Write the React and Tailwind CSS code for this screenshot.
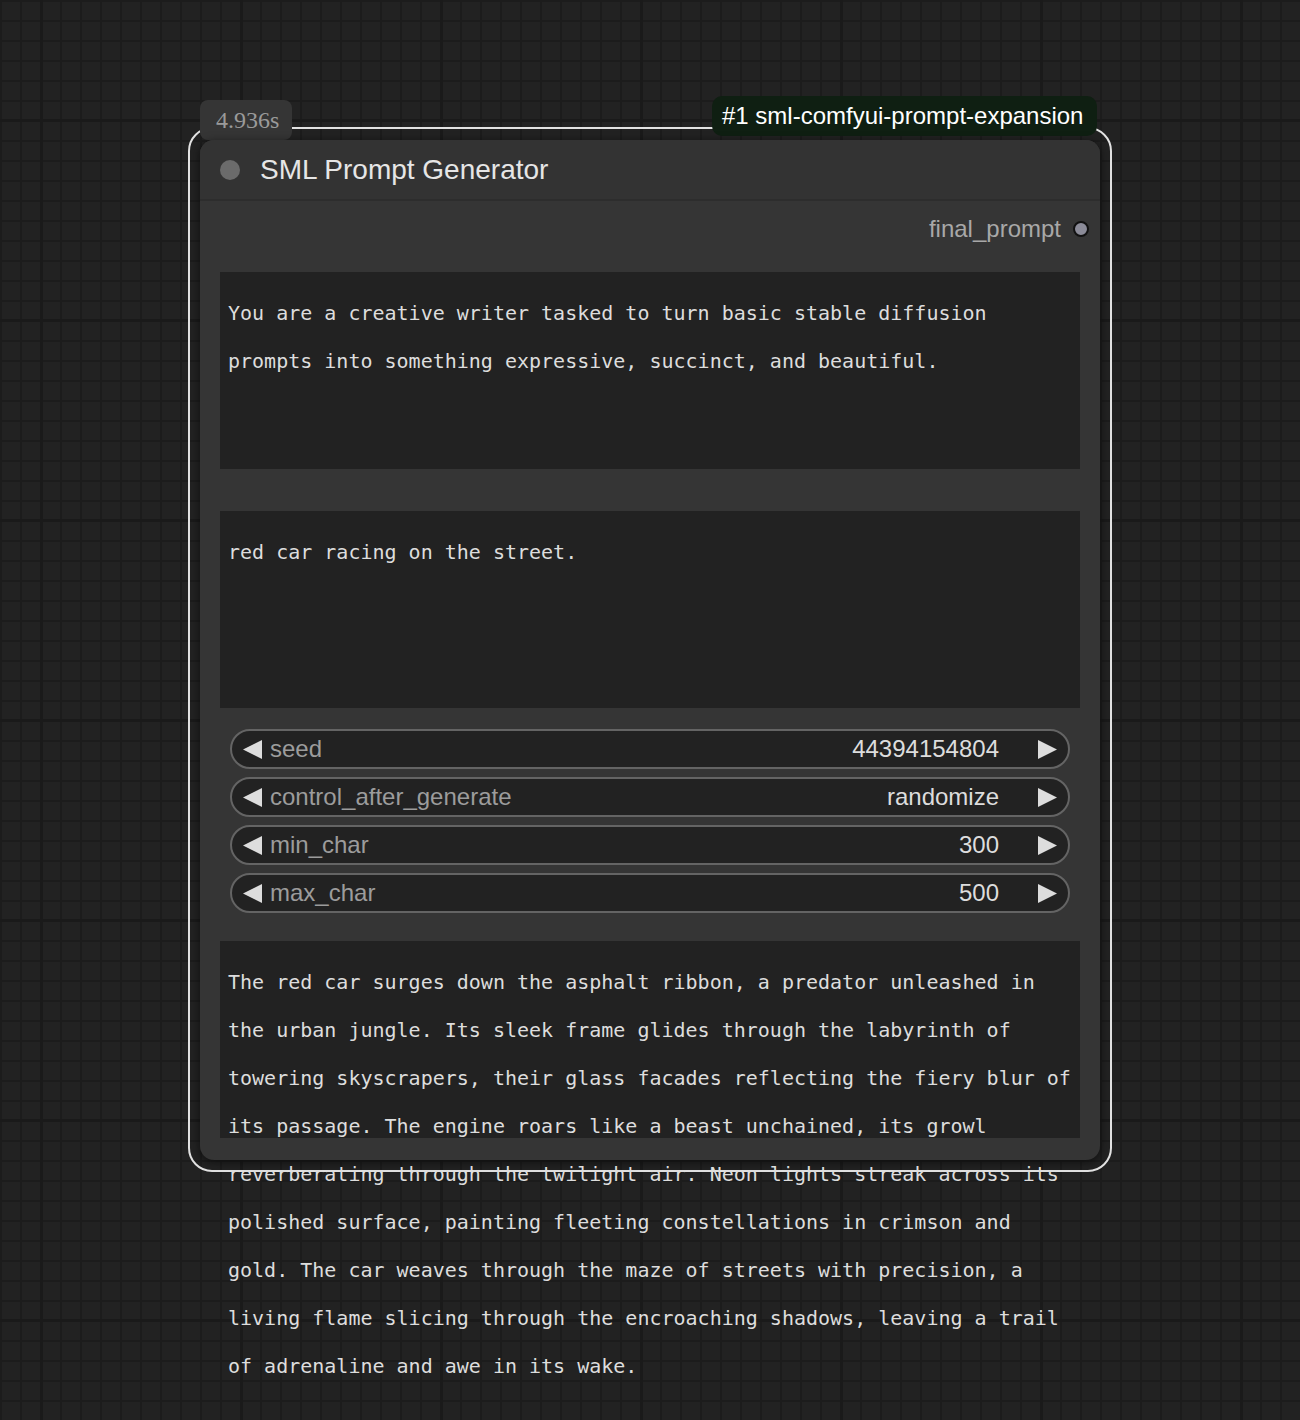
import React from 'react'

const outputLines = [
  'The red car surges down the asphalt ribbon, a predator unleashed in',
  'the urban jungle. Its sleek frame glides through the labyrinth of',
  'towering skyscrapers, their glass facades reflecting the fiery blur of',
  'its passage. The engine roars like a beast unchained, its growl',
  'reverberating through the twilight air. Neon lights streak across its',
  'polished surface, painting fleeting constellations in crimson and',
  'gold. The car weaves through the maze of streets with precision, a',
  'living flame slicing through the encroaching shadows, leaving a trail',
  'of adrenaline and awe in its wake.',
]

const widgets = [
  { label: 'seed', value: '44394154804' },
  { label: 'control_after_generate', value: 'randomize' },
  { label: 'min_char', value: '300' },
  { label: 'max_char', value: '500' },
]

function Arrow({ dir }) {
  return (
    <svg width="19" height="19" viewBox="0 0 19 19" className="shrink-0">
      {dir === 'left'
        ? <polygon points="19,0 19,19 0,9.5" fill="#dddddd" />
        : <polygon points="0,0 0,19 19,9.5" fill="#dddddd" />}
    </svg>
  )
}

function TextBox({ lines, className = '' }) {
  return (
    <div className={`h-[197px] mx-[20px] bg-[#222222] pl-[8px] pt-[17px] font-['DejaVu_Sans_Mono',monospace] text-[20px] leading-[48px] text-[#dddddd] whitespace-pre ${className}`}>
      {lines.map((l, i) => <div key={i}>{l}</div>)}
    </div>
  )
}

export default function App() {
  return (
    <div className="w-full min-h-[1420px] pl-[188px] pt-[127px] bg-[#222222] [background-image:linear-gradient(to_right,#1a1a1a_3px,transparent_3px),linear-gradient(to_bottom,#1a1a1a_3px,transparent_3px),linear-gradient(to_right,#1c1c1c_2px,transparent_2px),linear-gradient(to_bottom,#1c1c1c_2px,transparent_2px)] [background-size:200px_200px,200px_200px,20px_20px,20px_20px] [background-position:40px_0,0_119px,0_0,0_0] font-['Liberation_Sans',Arial,sans-serif]">
      {/* selection outline */}
      <div className="relative w-[924px] h-[1045px] border-2 border-[#e2e2e2] rounded-[24px] px-[10px] pt-[11px]">
        {/* execution time badge */}
        <div className="absolute left-[10px] top-[-29px] w-[92px] h-[40px] rounded-[8px] bg-[#353535] pl-[16px] flex items-center font-['Liberation_Serif',serif] text-[24px] text-[#9a9a9a]">
          4.936s
        </div>
        {/* node id badge */}
        <div className="absolute left-[522px] top-[-33px] h-[40px] w-[385px] rounded-[10px] bg-[#0f1f12] pl-[10px] flex items-center text-[24px] text-white">
          #1 sml-comfyui-prompt-expansion
        </div>

        {/* node */}
        <div className="relative w-[900px] h-[1020px] rounded-[14px] bg-[#353535] shadow-[0_2px_10px_rgba(0,0,0,0.55)] flex flex-col">
          <div className="h-[61px] shrink-0 rounded-t-[14px] bg-[#333333] border-b-2 border-[#2d2d2d] flex items-center pl-[20px] gap-[20px]">
            <div className="w-5 h-5 rounded-full bg-[#6b6b6b]" />
            <span className="text-[28px] text-[#e6e6e6]">SML Prompt Generator</span>
          </div>

          <div className="h-[56px] shrink-0 flex items-center justify-end pr-[11px] gap-[12px]">
            <span className="text-[24px] text-[#a8a8a8]">final_prompt</span>
            <div className="w-4 h-4 rounded-full bg-[#8b8b98] border-2 border-[#111111]" />
          </div>

          <TextBox className="mt-[15px]" lines={['You are a creative writer tasked to turn basic stable diffusion', 'prompts into something expressive, succinct, and beautiful.']} />
          <TextBox className="mt-[42px]" lines={['red car racing on the street.']} />

          <div className="mt-[21px] mx-[30px] flex flex-col gap-2">
            {widgets.map(w => (
              <div key={w.label} className="h-10 rounded-full border-2 border-[#646464] bg-[#222222] flex items-center pl-[11px] pr-[11px] text-[24px]">
                <Arrow dir="left" />
                <span className="ml-[8px] text-[#9c9c9c]">{w.label}</span>
                <span className="ml-auto text-[#dddddd]">{w.value}</span>
                <span className="ml-[39px]"><Arrow dir="right" /></span>
              </div>
            ))}
          </div>

          <TextBox className="mt-[28px]" lines={outputLines} />
        </div>
      </div>
    </div>
  )
}
